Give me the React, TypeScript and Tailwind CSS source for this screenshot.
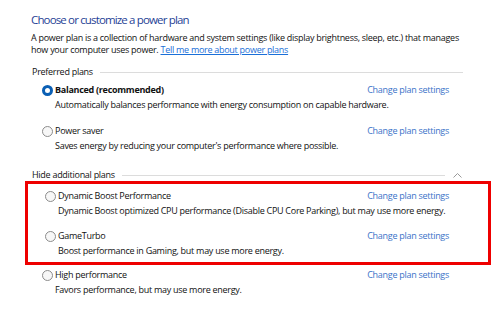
const PLAN_FONT = { fontFamily: "'Open Sans', 'Noto Sans', sans-serif" }

type Plan = {
  name: string
  desc: string
  selected?: boolean
}

function Radio({ selected }: { selected?: boolean }) {
  if (selected) {
    return <span className="block size-[11px] shrink-0 rounded-full border-[3px] border-[#0a5fb4] bg-white" />
  }
  return <span className="block size-[11px] shrink-0 rounded-full border border-[#8c8c8c] bg-[#f7f7f7]" />
}

function PlanRow({ plan }: { plan: Plan }) {
  return (
    <div className="pl-[11px] pr-[14px] whitespace-nowrap text-[9px] tracking-[-0.28px]">
      <div className="flex items-center h-[14px]">
        <Radio selected={plan.selected} />
        <span className={`ml-[2px] leading-[14px] text-[#111] ${plan.selected ? "font-bold" : ""}`}>
          {plan.name}
        </span>
        <span className="ml-auto leading-[14px] text-[#3a72c8]">Change plan settings</span>
      </div>
      <div className="pl-[13px] leading-[14px] text-[#111] mt-[1px]">{plan.desc}</div>
    </div>
  )
}

function SectionHeading({ label, chevron }: { label: string; chevron?: boolean }) {
  return (
    <div className="flex items-center h-[14px] pl-[1px]">
      <span className="text-[9px] tracking-[-0.28px] leading-[14px] text-[#111] whitespace-nowrap">{label}</span>
      <div className="flex-1 ml-[7px] h-px bg-[#dcdcdc]" />
      {chevron ? (
        <svg width="9" height="6" viewBox="0 0 9 6" className="ml-[8px] mr-[1px]">
          <path d="M0.5 5.5 L4.5 1.5 L8.5 5.5" fill="none" stroke="#9a9a9a" strokeWidth="1" />
        </svg>
      ) : null}
    </div>
  )
}

export default function App() {
  return (
    <div className="w-[496px] h-[311px] bg-white overflow-hidden pl-[31px] pr-[33px] pt-[10px]" style={PLAN_FONT}>
      <h1 className="text-[11.5px] tracking-[-0.85px] leading-[20px] font-normal text-[#1f3f95] whitespace-nowrap">
        Choose or customize a power plan
      </h1>

      <p className="mt-[2px] text-[9px] tracking-[-0.28px] leading-[12px] text-[#111] whitespace-nowrap">
        A power plan is a collection of hardware and system settings (like display brightness, sleep, etc.) that manages
        <br />
        how your computer uses power.{" "}
        <span className="text-[#1a6fd8] underline">Tell me more about power plans</span>
      </p>

      <div className="mt-[9px]">
        <SectionHeading label="Preferred plans" />
      </div>

      <div className="mt-[4px] flex flex-col gap-[12px]">
        <PlanRow
          plan={{
            name: "Balanced (recommended)",
            desc: "Automatically balances performance with energy consumption on capable hardware.",
            selected: true,
          }}
        />
        <PlanRow
          plan={{
            name: "Power saver",
            desc: "Saves energy by reducing your computer's performance where possible.",
          }}
        />
      </div>

      <div className="mt-[15px]">
        <SectionHeading label="Hide additional plans" chevron />
      </div>

      {/* red highlight box */}
      <div className="-ml-[6px] -mr-[28px] -mt-[1px] border-[3px] border-[#ee0000] pl-[6px] pr-[25px] pt-[5px] pb-[4px] flex flex-col gap-[11px]">
        <PlanRow
          plan={{
            name: "Dynamic Boost Performance",
            desc: "Dynamic Boost optimized CPU performance (Disable CPU Core Parking), but may use more energy.",
          }}
        />
        <PlanRow
          plan={{
            name: "GameTurbo",
            desc: "Boost performance in Gaming, but may use more energy.",
          }}
        />
      </div>

      <div className="mt-[3px]">
        <PlanRow
          plan={{
            name: "High performance",
            desc: "Favors performance, but may use more energy.",
          }}
        />
      </div>
    </div>
  )
}
